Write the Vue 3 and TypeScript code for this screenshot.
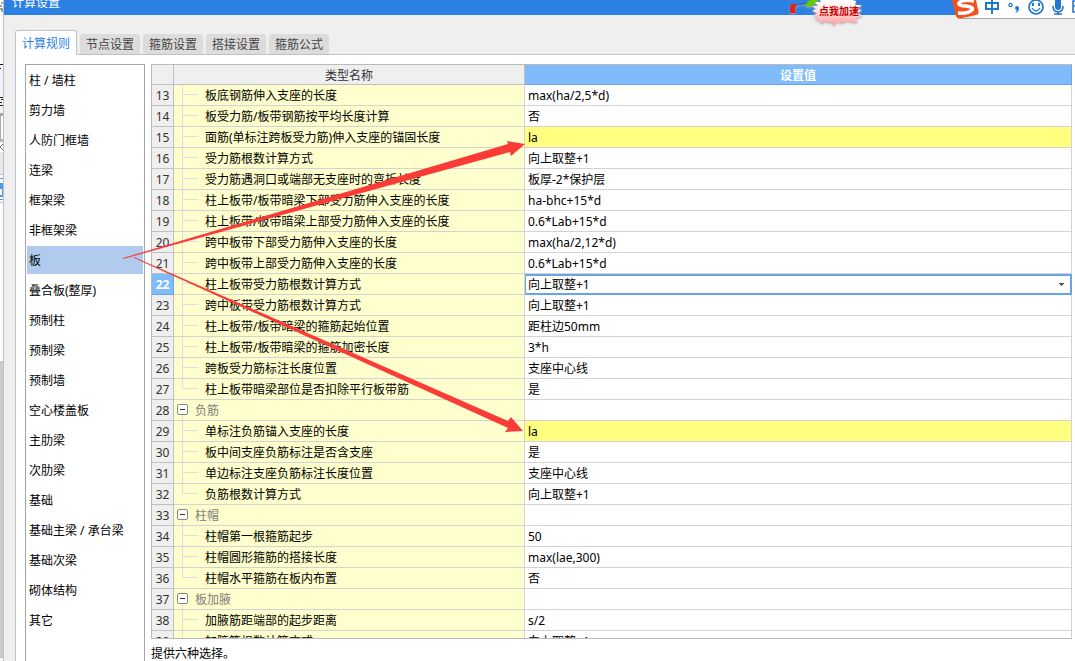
<script setup lang="ts">
import { ref } from 'vue'

interface Row {
  no: number
  name: string
  value?: string
  kind?: 'group' | 'changed' | 'editing'
  last?: boolean
}

const tabs = ['计算规则', '节点设置', '箍筋设置', '搭接设置', '箍筋公式']
const activeTab = ref('计算规则')

const categories = [
  '柱 / 墙柱', '剪力墙', '人防门框墙', '连梁', '框架梁', '非框架梁', '板',
  '叠合板(整厚)', '预制柱', '预制梁', '预制墙', '空心楼盖板', '主肋梁', '次肋梁',
  '基础', '基础主梁 / 承台梁', '基础次梁', '砌体结构', '其它',
]
const activeCategory = ref('板')

const rows: Row[] = [
  { no: 13, name: '板底钢筋伸入支座的长度', value: 'max(ha/2,5*d)' },
  { no: 14, name: '板受力筋/板带钢筋按平均长度计算', value: '否' },
  { no: 15, name: '面筋(单标注跨板受力筋)伸入支座的锚固长度', value: 'la', kind: 'changed' },
  { no: 16, name: '受力筋根数计算方式', value: '向上取整+1' },
  { no: 17, name: '受力筋遇洞口或端部无支座时的弯折长度', value: '板厚-2*保护层' },
  { no: 18, name: '柱上板带/板带暗梁下部受力筋伸入支座的长度', value: 'ha-bhc+15*d' },
  { no: 19, name: '柱上板带/板带暗梁上部受力筋伸入支座的长度', value: '0.6*Lab+15*d' },
  { no: 20, name: '跨中板带下部受力筋伸入支座的长度', value: 'max(ha/2,12*d)' },
  { no: 21, name: '跨中板带上部受力筋伸入支座的长度', value: '0.6*Lab+15*d' },
  { no: 22, name: '柱上板带受力筋根数计算方式', value: '向上取整+1', kind: 'editing' },
  { no: 23, name: '跨中板带受力筋根数计算方式', value: '向上取整+1' },
  { no: 24, name: '柱上板带/板带暗梁的箍筋起始位置', value: '距柱边50mm' },
  { no: 25, name: '柱上板带/板带暗梁的箍筋加密长度', value: '3*h' },
  { no: 26, name: '跨板受力筋标注长度位置', value: '支座中心线' },
  { no: 27, name: '柱上板带暗梁部位是否扣除平行板带筋', value: '是', last: true },
  { no: 28, name: '负筋', kind: 'group' },
  { no: 29, name: '单标注负筋锚入支座的长度', value: 'la', kind: 'changed' },
  { no: 30, name: '板中间支座负筋标注是否含支座', value: '是' },
  { no: 31, name: '单边标注支座负筋标注长度位置', value: '支座中心线' },
  { no: 32, name: '负筋根数计算方式', value: '向上取整+1', last: true },
  { no: 33, name: '柱帽', kind: 'group' },
  { no: 34, name: '柱帽第一根箍筋起步', value: '50' },
  { no: 35, name: '柱帽圆形箍筋的搭接长度', value: 'max(lae,300)' },
  { no: 36, name: '柱帽水平箍筋在板内布置', value: '否', last: true },
  { no: 37, name: '板加腋', kind: 'group' },
  { no: 38, name: '加腋筋距端部的起步距离', value: 's/2' },
  { no: 39, name: '加腋筋根数计算方式', value: '向上取整+1' },
]
const countMethod = ref('向上取整+1')
</script>

<template>
  <div class="screen">
    <svg class="behind" width="3" height="661" aria-hidden="true">
      <rect width="3" height="661" fill="#fff" />
      <path d="M1 3h2M0 6h2M0 9h3M1 11h2" stroke="#444" />
      <rect y="64" width="3" height="1" fill="#111" />
      <rect y="65" width="3" height="48" fill="#f1f3f4" />
      <path d="M0 68.500h1M0 97.500h3M1 99.500h2M0 102.500h2M0 105.500h3" stroke="#222" />
      <rect y="113" width="3" height="3" fill="#a8a8a8" />
      <rect y="116" width="1" height="23" fill="#aaa" />
      <rect x="1" y="116" width="2" height="22" fill="#fff" />
      <rect y="139" width="3" height="3" fill="#b5b5bb" />
      <path d="M3 144L0 147L3 150" fill="none" stroke="#777" />
      <rect y="152" width="3" height="22" fill="#e8e8e8" />
      <rect y="174" width="3" height="1" fill="#c0c0c8" />
      <rect y="178" width="3" height="1" fill="#4b9cf0" />
      <rect y="183" width="3" height="14" fill="#4b9cf0" />
      <rect y="189" width="2" height="6" fill="#fff" />
      <rect y="199" width="3" height="1" fill="#4b9cf0" />
      <rect y="202" width="3" height="1" fill="#c0c0c8" />
      <rect y="361" width="3" height="297" fill="#cacaca" />
    </svg>

    <main class="dialog">
      <header class="titlebar"><h1>计算设置</h1></header>
      <nav class="tabs" role="tablist">
        <button
          v-for="t in tabs" :key="t" type="button" role="tab" class="tab"
          :class="{ active: t === activeTab }" :aria-selected="t === activeTab"
          @click="activeTab = t"
        >{{ t }}</button>
      </nav>

      <section class="pane">
        <div class="categories">
          <button
            v-for="c in categories" :key="c" type="button" class="category"
            :class="{ active: c === activeCategory }" @click="activeCategory = c"
          >{{ c }}</button>
        </div>

        <div class="content">
          <div class="grid">
            <table>
              <colgroup><col class="c-no"><col class="c-name"><col></colgroup>
              <thead>
                <tr><th></th><th>类型名称</th><th class="picked">设置值</th></tr>
              </thead>
              <tbody>
                <tr v-for="r in rows" :key="r.no" :class="r.kind">
                  <th scope="row">{{ r.no }}</th>
                  <td class="name">
                    <div v-if="r.kind === 'group'" class="cell">
                      <button type="button" class="fold" aria-label="折叠"></button>
                      <span class="text">{{ r.name }}</span>
                    </div>
                    <div v-else class="cell">
                      <span class="branch" :class="{ last: r.last }"></span>
                      <label v-if="r.kind === 'editing'" class="text" for="count-method">{{ r.name }}</label>
                      <span v-else class="text">{{ r.name }}</span>
                    </div>
                  </td>
                  <td class="value">
                    <div v-if="r.kind === 'editing'" class="editor">
                      <select id="count-method" v-model="countMethod">
                        <option>向上取整+1</option>
                      </select>
                      <svg width="5" height="3" aria-hidden="true"><path d="M0 0h5v1H4v1H3v1H2V2H1V1H0z" fill="#555" /></svg>
                    </div>
                    <template v-else>{{ r.value }}</template>
                  </td>
                </tr>
              </tbody>
            </table>
          </div>
          <p class="hint">提供六种选择。</p>
        </div>
      </section>
    </main>

    <svg class="arrows" width="1075" height="661" aria-hidden="true">
      <g fill="#fb3b37">
        <path d="M123 258L508 144L507 141L525 144L511 156L510 152L123 259Z" />
        <path d="M134 257L508 421L511 417L523 431L505 432L508 428L134 258Z" />
      </g>
    </svg>

    <div class="booster">
      <svg width="80" height="30" viewBox="0 0 80 30" aria-hidden="true">
        <defs>
          <linearGradient id="burst" x2="0" y2="1">
            <stop offset="0" stop-color="#fff" /><stop offset="0.400" stop-color="#ffe2e2" /><stop offset="1" stop-color="#ff9a9a" />
          </linearGradient>
        </defs>
        <path d="M16 4L28 2L28 4L16 5Z" fill="#2465b8" />
        <path d="M11 4L17 4L15 8L16 13L10 13Q9 8 11 4Z" fill="#e2231a" />
        <path d="M25 6Q28 0 31 0H39Q35 4 30 7Z" fill="#62c900" />
        <path d="M40 0L41 2L35 2L38 6L32 6L36 9L32 11L37 13L33 16L38 17L35 21L40 20L41 24L46 21L49 23L52 22L54 26L56 22L64 23L66 21L77 23L76 18L83 16L78 13L82 10L77 9L82 5L75 5L76 1L72 0Z" fill="url(#burst)" />
      </svg>
      <button type="button">点我加速</button>
    </div>

    <div class="ime">
      <svg width="130" height="19" viewBox="945 0 130 19" aria-hidden="true">
        <path d="M975 0H1075V18H975Z" fill="#fff" />
        <path d="M960 18.500H1075" stroke="#a6a6ae" />
        <path d="M952 0L956 16Q957 19 960 18.600L976 15Q979 14 978.600 12L976 0Z" fill="#f4511e" />
        <path d="M974 1Q963 -1 959 3Q958 6 966 6Q974 7 972 10Q968 14 958 13" fill="none" stroke="#fff" stroke-width="3.500" />
        <g fill="none" stroke="#2577cc" stroke-width="2">
          <path d="M986 3H998V9H986ZM992 0V14" />
          <circle cx="1010.500" cy="5" r="1.600" stroke-width="1.300" />
          <circle cx="1036" cy="7" r="7" stroke-width="1.700" />
          <path d="M1032 8Q1036 14 1040 8" stroke-width="1.300" />
          <path d="M1053 6Q1053 12 1058 12Q1063 12 1063 6M1058 12V15M1054 14H1062" stroke-width="1.600" />
          <path d="M1076 1H1073V12H1076M1073 6H1076" stroke-width="1.600" />
        </g>
        <g fill="#2577cc">
          <circle cx="1017" cy="8" r="2" /><path d="M1019 8Q1019 12 1015 13Q1017 11 1017 9Z" />
          <rect x="1032" y="3" width="2" height="3" /><rect x="1038" y="3" width="2" height="3" />
          <rect x="1055" y="-3" width="6" height="13" rx="3" />
        </g>
      </svg>
    </div>
  </div>
</template>

<style>
body { margin: 0; overflow: hidden; }
</style>

<style scoped>
.screen {
  position: relative;
  display: flex;
  height: 100vh;
  overflow: hidden;
  background: #fff;
  color: #000;
  font: 12px/20px "Noto Sans", "Noto Sans CJK SC", sans-serif;
}
button, select { font: inherit; color: inherit; border: 0; padding: 0; margin: 0; background: none; }
.behind { flex: none; }
.dialog {
  flex: 1;
  min-width: 0;
  display: flex;
  flex-direction: column;
  background: #efefef;
  border-left: 1px solid #c0c0c8;
}
.titlebar { height: 15px; flex: none; background: #2c80e2; overflow: hidden; }
.titlebar h1 { margin: 0 0 0 8px; font-size: 12px; line-height: 6px; font-weight: 400; color: #fff; }
.tabs { display: flex; align-items: flex-end; gap: 3px; margin: 15px 0 0 11px; height: 24px; flex: none; }
.tab {
  box-sizing: border-box;
  width: 60px;
  height: 20px;
  padding-top: 2px;
  line-height: 18px;
  background: #dcdcdc;
  color: #444;
  border-radius: 3px 3px 0 0;
  text-align: center;
}
.tab.active {
  width: 62px;
  height: 25px;
  margin-bottom: -1px;
  z-index: 1;
  background: #fff;
  color: #2c80e2;
  border: 1px solid #c0c0c8;
  border-bottom: 0;
}
.pane {
  flex: 1;
  min-height: 0;
  display: flex;
  gap: 6px;
  margin-left: 11px;
  padding: 9px 3px 0 9px;
  background: #fff;
  border: solid #c0c0c8;
  border-width: 1px 0 0 1px;
}
.categories {
  box-sizing: border-box;
  width: 120px;
  flex: none;
  display: flex;
  flex-direction: column;
  gap: 2px;
  padding: 1px;
  border: 1px solid #a5a5a5;
  border-bottom: 0;
}
.category { box-sizing: border-box; flex: none; height: 28px; padding: 2px 0 0 2px; text-align: left; white-space: nowrap; }
.category.active { background: #b0cbee; }
.content { flex: 1; min-width: 0; display: flex; flex-direction: column; }
.grid { flex: 1; min-height: 0; overflow: hidden; border: solid #bbb; border-width: 1px 0 1px 1px; }
table { width: 100%; table-layout: fixed; border-collapse: separate; border-spacing: 0; }
.c-no { width: 22px; }
.c-name { width: 351px; }
th, td {
  box-sizing: border-box;
  height: 21px;
  padding: 2px 0 0;
  border: solid #d3d3d3;
  border-width: 0 1px 1px 0;
  font-weight: 400;
  line-height: 18px;
  white-space: nowrap;
}
th { background: #efefef; color: #333; border-color: #c0c0c0; text-align: center; }
thead th { height: 20px; line-height: 17px; }
th.picked { background: #80bbfb; color: #fff; font-weight: 700; border-color: #6aa6e6; }
.editing th { background: #80bbfb; color: #fff; font-weight: 700; border-color: #6aa6e6; }
.name { padding: 0; background: #ffffcd; }
.value { padding-left: 3px; text-align: left; }
.changed .value { background: #ffff80; }
.group .name { color: #808080; }
.cell { display: flex; height: 20px; }
.group .cell { background: linear-gradient(#dedede, #dedede) 8px 15px / 1px 5px no-repeat; }
.text { padding-top: 2px; line-height: 18px; }
.branch { width: 23px; height: 20px; margin-left: 8px; background: linear-gradient(#dedede, #dedede) 0 9px / 16px 1px no-repeat, linear-gradient(#dedede, #dedede) 0 0 / 1px 20px no-repeat; }
.branch.last { background-size: 16px 1px, 1px 9px; }
.fold {
  box-sizing: border-box;
  width: 11px;
  height: 11px;
  margin: 4px 7px 0 3px;
  border: 1px solid #888;
  border-radius: 2px;
  background: linear-gradient(#333, #333) 2px 4px / 5px 1px no-repeat #fff;
}
.editing .value { padding: 0; border: 0; }
.editor { box-sizing: border-box; display: flex; align-items: center; height: 21px; padding-right: 6px; border: 2px solid #66a6e8; border-left-width: 1px; }
.editor select { flex: 1; min-width: 0; height: 17px; padding-left: 2px; line-height: 17px; appearance: none; outline: 0; }
.hint { flex: none; margin: 0; height: 22px; line-height: 29px; }
.arrows { position: absolute; left: 0; top: 0; pointer-events: none; }
.booster { position: absolute; left: 780px; top: 0; width: 80px; height: 30px; }
.booster svg { position: absolute; left: 0; top: 0; overflow: visible; filter: drop-shadow(0 1px 1px #aaa); }
.booster button { position: absolute; left: 39px; top: 1px; font-size: 10px; font-weight: 700; color: #c60000; white-space: nowrap; }
.ime { position: absolute; right: 0; top: 0; height: 19px; }
.ime svg { display: block; }
</style>
